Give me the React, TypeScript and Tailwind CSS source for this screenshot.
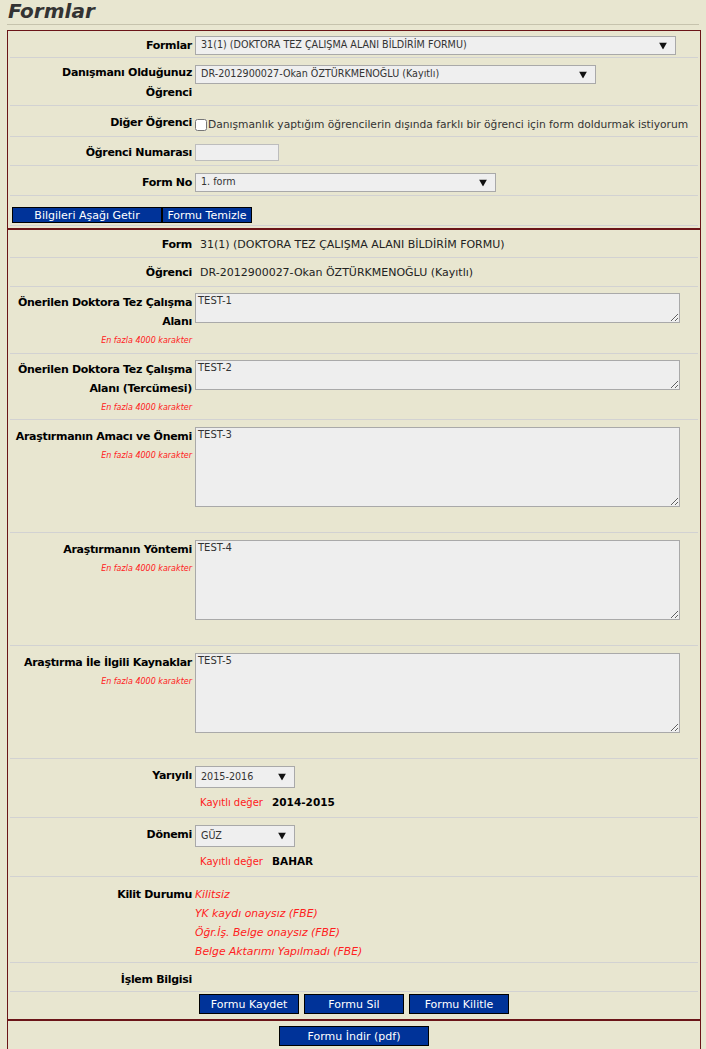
import React from "react";

const font = "[font-family:'DejaVu_Sans',sans-serif]";

const Triangle: React.FC = () => (
  <svg
    width="8"
    height="7"
    viewBox="0 0 8 7"
    className="pointer-events-none absolute right-[9px] top-1/2 -translate-y-1/2"
  >
    <path d="M0 0 L8 0 L4 7 Z" fill="#111" />
  </svg>
);

const Select: React.FC<{ value: string; width: string; height?: string }> = ({
  value,
  width,
  height = "h-[19px]",
}) => (
  <div className={`relative ${width} ${height}`}>
    <select
      defaultValue={value}
      className={`h-full w-full appearance-none border border-[#a9a9a9] bg-[#efefef] pl-[5px] text-[9.6px] text-[#333] ${font}`}
    >
      <option>{value}</option>
    </select>
    <Triangle />
  </div>
);

const Note: React.FC = () => (
  <div className="whitespace-nowrap text-[8px] italic leading-[19px] text-[#ff2020]">
    En fazla 4000 karakter
  </div>
);

const labelText = "whitespace-nowrap text-[11px] font-bold tracking-[-0.3px] text-black";

const Label: React.FC<{ children: React.ReactNode; pt?: string; lh?: string }> = ({
  children,
  pt = "pt-[7px]",
  lh = "leading-[19px]",
}) => (
  <div className={`w-[182px] shrink-0 text-right ${pt}`}>
    <div className={`${labelText} ${lh}`}>{children}</div>
  </div>
);

const Row: React.FC<{ h: string; children: React.ReactNode; line?: boolean }> = ({
  h,
  children,
  line = true,
}) => (
  <div className={`flex gap-[3px] ${h} ${line ? "border-b border-[#d2d2d2]" : ""}`}>
    {children}
  </div>
);

const TextRow: React.FC<{ label: React.ReactNode; text: string; h: string; ta: string; pt: string }> = ({
  label,
  text,
  h,
  ta,
  pt,
}) => (
  <Row h={h}>
    <div className={`w-[182px] shrink-0 text-right ${pt}`}>
      <div className={`${labelText} leading-[19px]`}>{label}</div>
      <Note />
    </div>
    <div className={pt}>
      <textarea
        defaultValue={text}
        className={`block w-[485px] ${ta} border border-[#a9a9a9] bg-[#eeeeee] px-[2px] py-0 text-[10px] leading-[14px] text-[#333] ${font}`}
      />
    </div>
  </Row>
);

const BlueButton: React.FC<{ children: React.ReactNode; w: string; h?: string }> = ({
  children,
  w,
  h = "h-[20px]",
}) => (
  <button
    className={`${w} ${h} border border-black bg-[#003399] text-center text-[11px] leading-none text-white ${font}`}
  >
    {children}
  </button>
);

export default function App() {
  return (
    <div className={`min-h-[1049px] bg-[#e8e6d0] text-[11px] text-[#222] ${font}`}>
      <div className="mx-[7px] h-[25px] border-b border-[#c6c3ad] pl-[1px]">
        <h1 className="text-[20px] font-bold italic leading-[22px] text-[#333]">Formlar</h1>
      </div>
      <div className="mx-[7px] mt-[5px] w-[694px] border-x border-t border-[#6b1518]">
        {/* search section */}
        <div className="px-[2px] pb-[2px]">
          <Row h="h-[27px]">
            <Label pt="pt-[5px]">Formlar</Label>
            <div className="pt-[5px]">
              <Select value="31(1) (DOKTORA TEZ ÇALIŞMA ALANI BİLDİRİM FORMU)" width="w-[481px]" />
            </div>
          </Row>
          <Row h="h-[48px]">
            <Label pt="pt-[5px]" lh="leading-[20px]">
              Danışmanı Olduğunuz
              <br />
              Öğrenci
            </Label>
            <div className="pt-[7px]">
              <Select value="DR-2012900027-Okan ÖZTÜRKMENOĞLU (Kayıtlı)" width="w-[401px]" />
            </div>
          </Row>
          <Row h="h-[31px]">
            <Label pt="pt-[7px]" lh="leading-[20px]">
              Diğer Öğrenci
            </Label>
            <div className="flex items-center whitespace-nowrap pt-[7px] leading-[20px]">
              <input type="checkbox" className="m-0 h-[12px] w-[12px]" />
              <span className="ml-[1px] text-[10.7px] text-[#333]">
                Danışmanlık yaptığım öğrencilerin dışında farklı bir öğrenci için form doldurmak istiyorum
              </span>
            </div>
          </Row>
          <Row h="h-[29px]">
            <Label pt="pt-[6px]" lh="leading-[20px]">
              Öğrenci Numarası
            </Label>
            <div className="pt-[7px]">
              <input
                type="text"
                className="block h-[17px] w-[84px] border border-[#bdbdbd] bg-[#efefef]"
              />
            </div>
          </Row>
          <Row h="h-[30px]">
            <Label pt="pt-[7px]">Form No</Label>
            <div className="pt-[7px]">
              <Select value="1. form" width="w-[301px]" />
            </div>
          </Row>
          <div className="flex h-[30px] items-start border-b border-[#d2d2d2] pl-[2px] pt-[11px]">
            <BlueButton w="w-[150px]" h="h-[16px]">
              Bilgileri Aşağı Getir
            </BlueButton>
            <BlueButton w="w-[90px]" h="h-[16px]">
              Formu Temizle
            </BlueButton>
          </div>
        </div>

        {/* form detail section */}
        <div className="border-t-2 border-[#6b1518] px-[2px]">
          <Row h="h-[28px]">
            <Label pt="pt-[5px]" lh="leading-[20px]">
              Form
            </Label>
            <div className="pl-[5px] pt-[5px] text-[11px] leading-[20px] text-[#222]">
              31(1) (DOKTORA TEZ ÇALIŞMA ALANI BİLDİRİM FORMU)
            </div>
          </Row>
          <Row h="h-[29px]">
            <Label pt="pt-[5px]" lh="leading-[20px]">
              Öğrenci
            </Label>
            <div className="pl-[5px] pt-[5px] text-[11px] leading-[20px] text-[#222]">
              DR-2012900027-Okan ÖZTÜRKMENOĞLU (Kayıtlı)
            </div>
          </Row>
          <TextRow
            label={
              <>
                Önerilen Doktora Tez Çalışma
                <br />
                Alanı
              </>
            }
            text="TEST-1"
            h="h-[67px]"
            ta="h-[30px]"
            pt="pt-[6px]"
          />
          <TextRow
            label={
              <>
                Önerilen Doktora Tez Çalışma
                <br />
                Alanı (Tercümesi)
              </>
            }
            text="TEST-2"
            h="h-[66px]"
            ta="h-[30px]"
            pt="pt-[6px]"
          />
          <TextRow label="Araştırmanın Amacı ve Önemi" text="TEST-3" h="h-[113px]" ta="h-[80px]" pt="pt-[7px]" />
          <TextRow label="Araştırmanın Yöntemi" text="TEST-4" h="h-[113px]" ta="h-[80px]" pt="pt-[7px]" />
          <TextRow label="Araştırma İle İlgili Kaynaklar" text="TEST-5" h="h-[113px]" ta="h-[80px]" pt="pt-[7px]" />

          <Row h="h-[59px]">
            <Label pt="pt-[7px]" lh="leading-[20px]">
              Yarıyılı
            </Label>
            <div className="pt-[7px]">
              <Select value="2015-2016" width="w-[100px]" height="h-[22px]" />
              <div className="mt-[5px] flex pl-[5px] leading-[19px]">
                <span className="w-[72px] text-[10px] text-[#ff2020]">Kayıtlı değer</span>
                <span className="text-[10.5px] font-bold text-black">2014-2015</span>
              </div>
            </div>
          </Row>
          <Row h="h-[59px]">
            <Label pt="pt-[7px]" lh="leading-[20px]">
              Dönemi
            </Label>
            <div className="pt-[7px]">
              <Select value="GÜZ" width="w-[100px]" height="h-[22px]" />
              <div className="mt-[5px] flex pl-[5px] leading-[19px]">
                <span className="w-[72px] text-[10px] text-[#ff2020]">Kayıtlı değer</span>
                <span className="text-[10.5px] font-bold text-black">BAHAR</span>
              </div>
            </div>
          </Row>
          <Row h="h-[86px]">
            <Label pt="pt-[8px]">Kilit Durumu</Label>
            <div className="pt-[8px] text-[10.8px] italic leading-[19px] text-[#ff2020]">
              <div>Kilitsiz</div>
              <div>YK kaydı onaysız (FBE)</div>
              <div>Öğr.İş. Belge onaysız (FBE)</div>
              <div>Belge Aktarımı Yapılmadı (FBE)</div>
            </div>
          </Row>
          <Row h="h-[29px]">
            <Label pt="pt-[7px]">İşlem Bilgisi</Label>
          </Row>
          <div className="flex h-[27px] justify-center gap-[5px] pt-[2px]">
            <BlueButton w="w-[100px]">Formu Kaydet</BlueButton>
            <BlueButton w="w-[100px]">Formu Sil</BlueButton>
            <BlueButton w="w-[100px]">Formu Kilitle</BlueButton>
          </div>
        </div>

        {/* download */}
        <div className="flex h-[40px] justify-center border-t-2 border-[#6b1518] pt-[5px]">
          <BlueButton w="w-[150px]">Formu İndir (pdf)</BlueButton>
        </div>
      </div>
    </div>
  );
}
